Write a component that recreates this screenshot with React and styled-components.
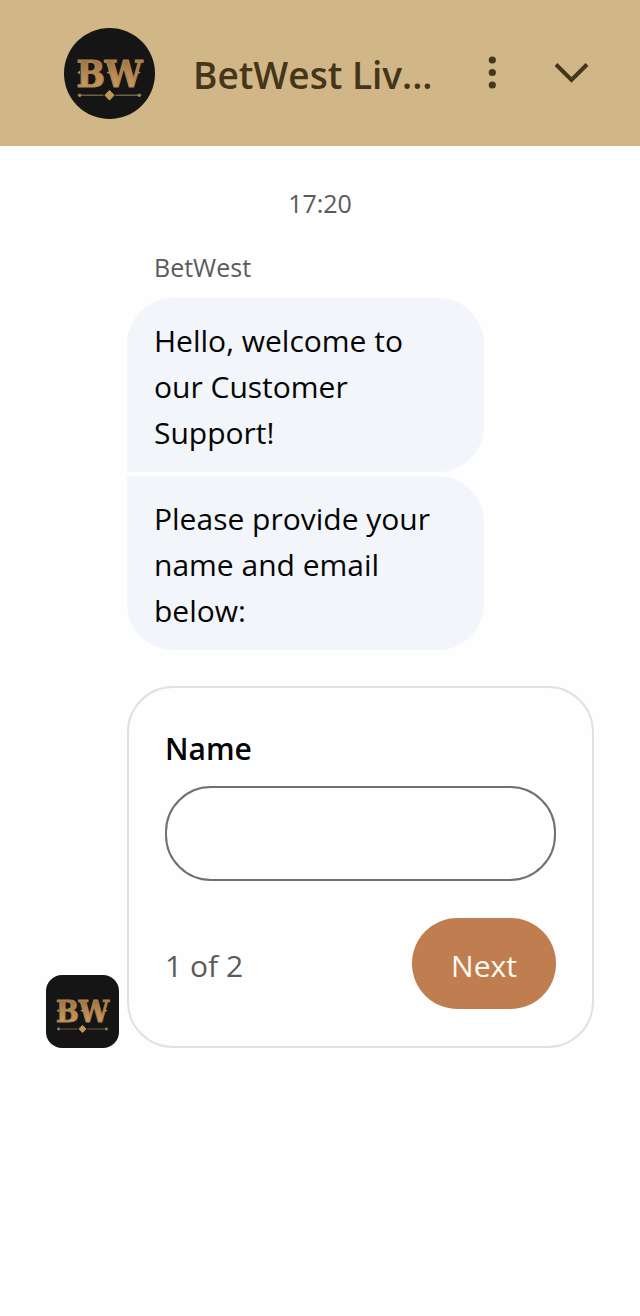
import React, { useId, useState } from 'react'
import styled, { createGlobalStyle } from 'styled-components'

const GlobalStyle = createGlobalStyle`
* {
    box-sizing: border-box;
}

body {
    margin: 0;
    background-color: #fefefe;
    color: #050505;
    font-family: "Open Sans", "Noto Sans", sans-serif;
    font-size: 30px;
    line-height: 46px;
}
`

const Container = styled.div`
min-height: 100vh;
display: flex;
flex-direction: column;
`

const Header = styled.header`
padding: 28px 46px 27px 64px;
display: flex;
align-items: center;
background-color: #d1b688;
color: #453519;
`

const Title = styled.h1`
flex: 1;
min-width: 0;
margin: 0;
padding: 2px 0px 0px 38px;
font-size: 37px;
font-weight: 600;
line-height: 50px;
white-space: nowrap;
overflow: hidden;
text-overflow: ellipsis;
`

const Actions = styled.div`
display: flex;
gap: 32px;
`

const IconButton = styled.button`
width: 48px;
height: 48px;
padding: 0;
border: none;
background: none;
color: inherit;
cursor: pointer;
`

const Icon = styled.svg`
display: block;
width: 48px;
height: 48px;
`

const LogoSvg = styled.svg`
display: block;
flex-shrink: 0;
width: ${(props) => props.$size}px;
height: ${(props) => props.$size}px;
border-radius: ${(props) => (props.$round ? '50%' : '16px')};
`

const Messages = styled.main`
padding: 39px 46px;
`

const Time = styled.p`
margin: 0px 0px 28px;
color: #5b5b5b;
font-size: 25px;
line-height: 36px;
text-align: center;
`

const Row = styled.div`
display: flex;
align-items: flex-end;
gap: 8px;
`

const Thread = styled.div`
flex: 1;
min-width: 0;
`

const Author = styled.p`
margin: 0px 0px 13px;
padding: 0px 27px;
color: #5b5b5b;
font-size: 25px;
line-height: 36px;
`

const Bubbles = styled.div`
display: flex;
flex-direction: column;
gap: 4px;
margin-bottom: 36px;
`

const Bubble = styled.p`
width: 76.5%;
margin: 0;
padding: 20px 27px 16px;
border-radius: 46px;
background-color: #f2f5fa;

&:not(:last-child) {
    border-bottom-left-radius: 0;
}

&:not(:first-child) {
    border-top-left-radius: 0;
}
`

const Form = styled.form`
padding: 38px 36px 37px;
border: 2px solid #e1e1e1;
border-radius: 46px;
`

const Label = styled.label`
display: block;
margin-bottom: 14px;
font-weight: 600;
`

const Input = styled.input`
display: block;
width: 100%;
height: 95px;
padding: 0px 36px;
border: 2px solid #707070;
border-radius: 46px;
background: none;
color: inherit;
font: inherit;
`

const FormFooter = styled.div`
display: flex;
align-items: center;
justify-content: space-between;
margin-top: 37px;
`

const Step = styled.span`
padding-top: 4px;
color: #5b5b5b;
`

const NextButton = styled.button`
width: 144px;
height: 91px;
padding: 4px 0px 0px;
border: none;
border-radius: 46px;
background-color: #c07d4f;
color: #fffaf2;
font: inherit;
cursor: pointer;
`

const Logo = ({ size, round }) => {
    const gold = useId()

    return (
        <LogoSvg $size={size} $round={round} viewBox="0 0 90 90" aria-hidden="true">
            <defs>
                <linearGradient id={gold} x1="0" y1="0" x2="0" y2="1">
                    <stop offset="0" stopColor="#8a673b" />
                    <stop offset="0.5" stopColor="#b88a52" />
                    <stop offset="1" stopColor="#d0a468" />
                </linearGradient>
            </defs>
            <rect width="90" height="90" fill="#151515" />
            <text
                x="45"
                y="58"
                textAnchor="middle"
                fontFamily="'DejaVu Serif Condensed', 'DejaVu Serif', serif"
                fontWeight="700"
                fontSize="37"
                fill={`url(#${gold})`}
                stroke="#b08650"
                strokeWidth="1.200"
            >
                BW
            </text>
            <path d="M13 44l3-2v4zM42 44l4-2v4zM76 44l-4-2v4z" fill="#b08650" />
            <path d="M15 66.500H39M51 66.500H75" stroke="#6f5d42" strokeWidth="1.300" />
            <circle cx="15.500" cy="66.500" r="1.800" fill="#98815a" />
            <circle cx="74.500" cy="66.500" r="1.800" fill="#98815a" />
            <path d="M45 62l4.500 4.500-4.500 4.500-4.500-4.500z" fill="#c0985a" stroke="#c0985a" strokeLinejoin="round" />
        </LogoSvg>
    )
}

const messages = [
    'Hello, welcome to our Customer Support!',
    'Please provide your name and email below:',
]

const App = () => {
    const [name, setName] = useState('')

    return (
        <Container>
            <GlobalStyle />
            <Header>
                <Logo size={91} round />
                <Title>BetWest Liv...</Title>
                <Actions>
                    <IconButton type="button" aria-label="Menu">
                        <Icon viewBox="0 0 48 48" fill="currentColor">
                            <circle cx="26.300" cy="10" r="3.600" />
                            <circle cx="26.300" cy="22.500" r="3.600" />
                            <circle cx="26.300" cy="35" r="3.600" />
                        </Icon>
                    </IconButton>
                    <IconButton type="button" aria-label="Minimize">
                        <Icon viewBox="0 0 48 48" fill="none" stroke="currentColor" strokeWidth="4">
                            <path d="M10 14.500l15.500 15.500L41 14.500" />
                        </Icon>
                    </IconButton>
                </Actions>
            </Header>

            <Messages>
                <Time>17:20</Time>
                <Row>
                    <Logo size={73} />
                    <Thread>
                        <Author>BetWest</Author>
                        <Bubbles>
                            {messages.map((message) => (
                                <Bubble key={message}>{message}</Bubble>
                            ))}
                        </Bubbles>
                        <Form onSubmit={(e) => e.preventDefault()}>
                            <Label htmlFor="name">Name</Label>
                            <Input
                                id="name"
                                type="text"
                                value={name}
                                onChange={(e) => setName(e.target.value)}
                            />
                            <FormFooter>
                                <Step>1 of 2</Step>
                                <NextButton type="submit">Next</NextButton>
                            </FormFooter>
                        </Form>
                    </Thread>
                </Row>
            </Messages>
        </Container>
    )
}

export default App
